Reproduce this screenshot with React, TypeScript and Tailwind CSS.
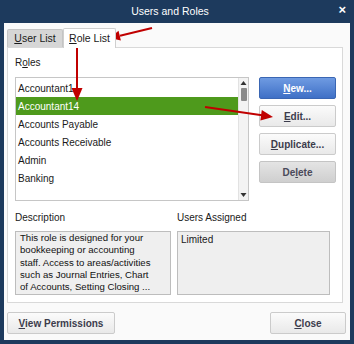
import React from "react";

const font = { fontFamily: '"Liberation Sans", Arial, sans-serif' };

function Btn({
  children,
  className = "",
  variant = "default",
}: {
  children: React.ReactNode;
  className?: string;
  variant?: "default" | "primary" | "disabled";
}) {
  const look =
    variant === "primary"
      ? "border-[#3a66b3] bg-gradient-to-b from-[#6f9be2] to-[#3f70c6] text-white"
      : variant === "disabled"
        ? "border-[#c4c4c4] bg-gradient-to-b from-[#e4e4e4] to-[#cfcfcf] text-[#4a4a5a]"
        : "border-[#cbcbcb] bg-gradient-to-b from-[#fbfbfb] to-[#e9e9e9] text-[#3c3c4c]";
  return (
    <div
      className={`flex h-[22px] items-center justify-center rounded-[2px] border text-[10px] font-bold ${look} ${className}`}
    >
      {children}
    </div>
  );
}

const roles = [
  "Accountant1",
  "Accountant14",
  "Accounts Payable",
  "Accounts Receivable",
  "Admin",
  "Banking",
];

export default function App() {
  return (
    <div
      className="relative flex h-[344px] w-[354px] flex-col bg-[#1d3a5d] px-[4px] pb-[4px] text-[#1a1a1a]"
      style={font}
    >
      {/* title bar */}
      <div className="relative flex h-[23px] shrink-0 items-center justify-center pr-[14px] text-[10.5px] text-white">
        Users and Roles
        <span className="absolute right-[4px] top-[3px] text-[13px] font-bold leading-[14px]">×</span>
      </div>

      <div className="flex flex-1 flex-col bg-[#fafafa] px-[3px]">
        {/* tabs */}
        <div className="flex h-[24px] items-end pt-[5px]">
          <div className="flex h-[18px] w-[56px] items-center justify-center rounded-t-[2px] border border-b-0 border-[#c4c4c4] bg-[#d6d6d6] text-[10.5px]">
            <span>
              <u>U</u>ser List
            </span>
          </div>
          <div className="relative z-10 -mb-px flex h-[20px] w-[53px] items-center justify-center rounded-t-[2px] border border-b-0 border-[#cfcfcf] bg-white text-[10.5px]">
            <span>
              <u>R</u>ole List
            </span>
          </div>
        </div>

        {/* panel */}
        <div className="flex h-[256px] w-[336px] flex-col border border-[#d9d9d9] bg-white pl-[7px] pr-[6px] pt-[9px]">
          <div className="h-[12px] text-[10px] leading-[12px]">
            R<u>o</u>les
          </div>
          <div className="mt-[8px] flex gap-[10px]">
            <div className="flex h-[124px] w-[234px] border border-[#c6c6c6] bg-white">
              <div className="flex-1 pt-[1px]">
                {roles.map((r, i) => (
                  <div
                    key={r}
                    className={`flex h-[18px] items-center pl-[2px] text-[10px] ${
                      i === 1 ? "bg-[#4e9a1c] text-white" : ""
                    }`}
                  >
                    {r}
                  </div>
                ))}
              </div>
              <div className="flex w-[10px] flex-col items-center border-l border-[#e2e2e2] bg-[#f3f3f3]">
                <svg width="7" height="6" viewBox="0 0 7 6" className="mt-[2px]">
                  <path d="M3.5 1 L6.5 5 L0.5 5 Z" fill="#333" />
                </svg>
                <div className="mt-[2px] h-[13px] w-[6px] rounded-[1px] bg-[#8a8a8a]" />
                <div className="flex-1" />
                <svg width="7" height="6" viewBox="0 0 7 6" className="mb-[2px]">
                  <path d="M0.5 1 L6.5 1 L3.5 5 Z" fill="#333" />
                </svg>
              </div>
            </div>
            <div className="flex w-[77px] flex-col gap-[6px]">
              <Btn variant="primary">
                <span>
                  <u>N</u>ew...
                </span>
              </Btn>
              <Btn>
                <span>
                  <u>E</u>dit...
                </span>
              </Btn>
              <Btn>
                <span>
                  <u>D</u>uplicate...
                </span>
              </Btn>
              <Btn variant="disabled">
                <span>
                  De<u>l</u>ete
                </span>
              </Btn>
            </div>
          </div>

          <div className="mt-[11px] flex gap-[6px] text-[10px] leading-[12px]">
            <div className="w-[156px]">Description</div>
            <div>Users Assigned</div>
          </div>
          <div className="mt-[7px] flex gap-[6px]">
            <div className="h-[64px] w-[156px] overflow-hidden border border-[#bdbdbd] bg-[#efefef] px-[4px] text-[9.6px] leading-[12.3px] text-[#111]">
              <div>This role is designed for your</div>
              <div>bookkeeping or accounting</div>
              <div>staff. Access to areas/activities</div>
              <div>such as Journal Entries, Chart</div>
              <div>of Accounts, Setting Closing ...</div>
            </div>
            <div className="h-[64px] w-[153px] border border-[#bdbdbd] bg-[#efefef] px-[3px] pt-[1px] text-[10px] leading-[13px]">
              Limited
            </div>
          </div>
        </div>

        {/* bottom buttons */}
        <div className="mt-[9px] flex justify-between pr-[1px]">
          <Btn className="w-[108px]">
            <span>
              <u>V</u>iew Permissions
            </span>
          </Btn>
          <Btn className="w-[76px]">
            <span>
              <u>C</u>lose
            </span>
          </Btn>
        </div>
      </div>

      {/* annotation arrows */}
      <svg
        className="pointer-events-none absolute left-0 top-0"
        width="354"
        height="344"
        viewBox="0 0 354 344"
      >
        <g stroke="#c00000" strokeWidth="2" fill="#c00000">
          <line x1="152" y1="28" x2="120" y2="35.7" />
          <polygon points="110,38 118.5,30.8 120.9,40.5" stroke="none" />
          <line x1="77" y1="45" x2="77" y2="89" />
          <polygon points="77,101 71.5,88 82.5,88" stroke="none" />
          <line x1="205" y1="107" x2="262" y2="115.3" />
          <polygon points="273,117 260.4,120.5 261.8,110" stroke="none" />
        </g>
      </svg>
    </div>
  );
}
